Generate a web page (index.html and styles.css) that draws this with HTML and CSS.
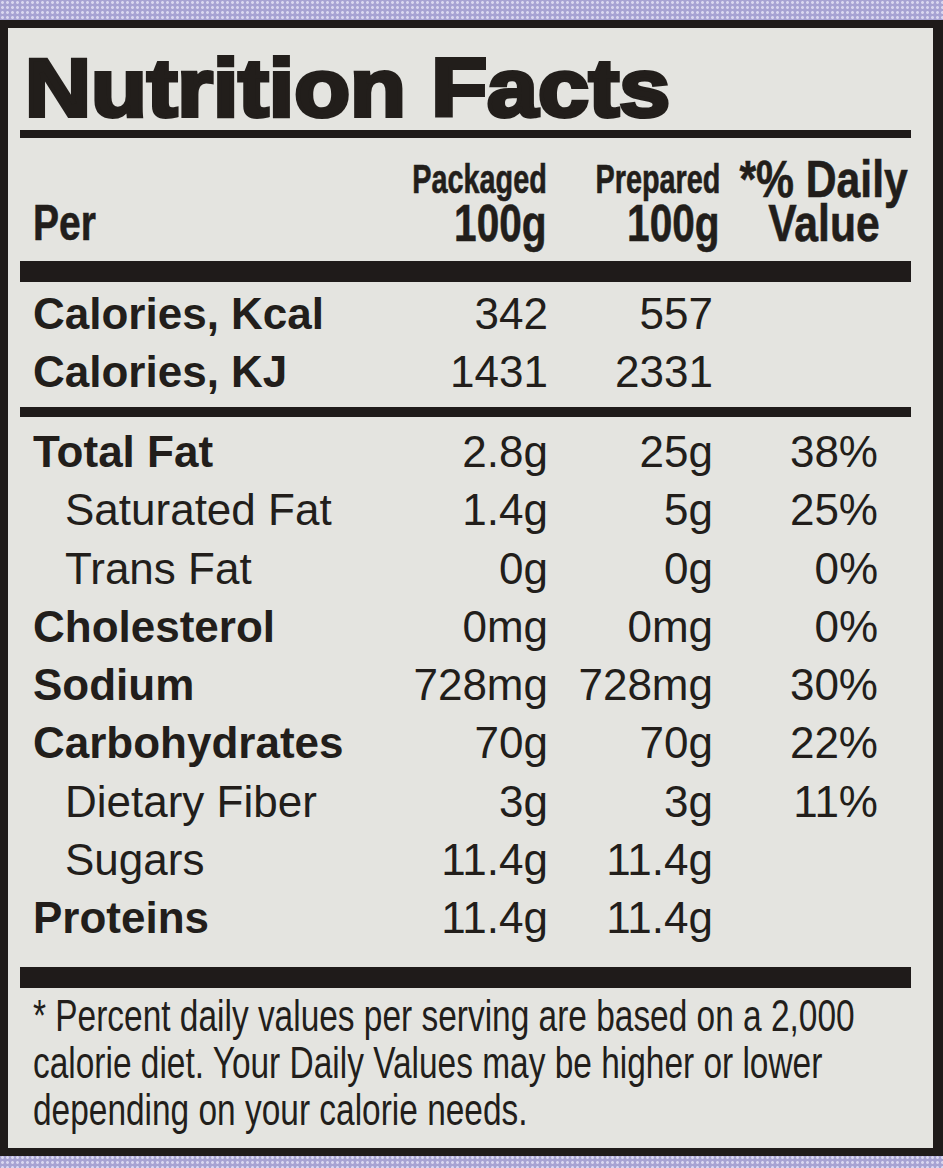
FILE: index.html
```html
<!DOCTYPE html>
<html lang="en">
<head>
<meta charset="utf-8">
<title>Nutrition Facts</title>
<link rel="stylesheet" href="styles.css">
</head>
<body>
<div class="label">
  <h1 class="title"><span class="title-text">Nutrition Facts</span></h1>
  <div class="rule rule-thin"></div>
  <div class="head">
    <div class="hcell hcell-per"><span class="hs">&nbsp;</span><span class="hb"><span class="cond">Per</span></span></div>
    <div class="hcell hcell-num"><span class="hs"><span class="cond">Packaged</span></span><span class="hb"><span class="cond">100g</span></span></div>
    <div class="hcell hcell-num"><span class="hs"><span class="cond">Prepared</span></span><span class="hb"><span class="cond">100g</span></span></div>
    <div class="hcell hcell-dv"><span class="hb1"><span class="cond">*% Daily</span></span><span class="hb"><span class="cond">Value</span></span></div>
  </div>
  <div class="rule rule-thick"></div>
  <div class="rows rows-cal">
    <div class="row"><span class="name bold">Calories, Kcal</span><span class="val">342</span><span class="val">557</span><span class="val"></span></div>
    <div class="row"><span class="name bold">Calories, KJ</span><span class="val">1431</span><span class="val">2331</span><span class="val"></span></div>
  </div>
  <div class="rule rule-mid"></div>
  <div class="rows rows-nut">
    <div class="row"><span class="name bold">Total Fat</span><span class="val">2.8g</span><span class="val">25g</span><span class="val">38%</span></div>
    <div class="row"><span class="name sub">Saturated Fat</span><span class="val">1.4g</span><span class="val">5g</span><span class="val">25%</span></div>
    <div class="row"><span class="name sub">Trans Fat</span><span class="val">0g</span><span class="val">0g</span><span class="val">0%</span></div>
    <div class="row"><span class="name bold">Cholesterol</span><span class="val">0mg</span><span class="val">0mg</span><span class="val">0%</span></div>
    <div class="row"><span class="name bold">Sodium</span><span class="val">728mg</span><span class="val">728mg</span><span class="val">30%</span></div>
    <div class="row"><span class="name bold">Carbohydrates</span><span class="val">70g</span><span class="val">70g</span><span class="val">22%</span></div>
    <div class="row"><span class="name sub">Dietary Fiber</span><span class="val">3g</span><span class="val">3g</span><span class="val">11%</span></div>
    <div class="row"><span class="name sub">Sugars</span><span class="val">11.4g</span><span class="val">11.4g</span><span class="val"></span></div>
    <div class="row"><span class="name bold">Proteins</span><span class="val">11.4g</span><span class="val">11.4g</span><span class="val"></span></div>
  </div>
  <div class="rule rule-thick"></div>
  <div class="note">
    <span class="note-line">* Percent daily values per serving are based on a 2,000</span>
    <span class="note-line">calorie diet. Your Daily Values may be higher or lower</span>
    <span class="note-line">depending on your calorie needs.</span>
  </div>
</div>
</body>
</html>
```

FILE: styles.css
```css
* { box-sizing: border-box; }

html, body {
  margin: 0;
  padding: 0;
}

body {
  width: 943px;
  height: 1168px;
  overflow: hidden;
  background-color: #a7a3d3;
  background-image: radial-gradient(circle, #d9d7ef 1.1px, transparent 1.7px);
  background-size: 5px 5px;
  font-family: "Liberation Sans", Arial, sans-serif;
  color: #221e1b;
}

.label {
  margin-top: 20px;
  width: 943px;
  height: 1136px;
  background: #e4e4e0;
  border: 8px solid #1f1b1a;
  border-right-width: 10px;
  padding: 0 22px 0 12px;
  overflow: hidden;
}

.title {
  margin: 0;
  padding: 19px 0 0 5px;
  font-size: 82px;
  line-height: 82px;
  font-weight: 700;
  white-space: nowrap;
}

.title-text {
  display: inline-block;
  transform: scaleX(1.115);
  transform-origin: left center;
  -webkit-text-stroke: 4px #221e1b;
}

.rule {
  background: #1f1b1a;
}

.rule-thin { height: 8px; margin-top: 1px; }
.rule-thick { height: 21px; }
.rule-mid { height: 10px; }

/* Header */
.head {
  display: grid;
  grid-template-columns: 1fr 167px 173px 191px;
  padding: 17px 0 18px 13px;
  font-weight: 700;
}

.hcell {
  display: flex;
  flex-direction: column;
  white-space: nowrap;
}

.hs, .hb, .hb1 {
  display: flex;
}

.hcell-num .hs,
.hcell-num .hb { justify-content: flex-end; }

.hcell-dv { padding-left: 16px; }
.hcell-dv .hb1,
.hcell-dv .hb { justify-content: center; }

.cond {
  display: inline-block;
  flex: none;
  transform: scaleX(0.78);
  -webkit-text-stroke: 0.6px #221e1b;
}

.hcell-per .cond { transform-origin: left center; }
.hcell-num .cond { transform-origin: right center; }
.hcell-num .hs .cond { transform: scaleX(0.72); }
.hcell-dv .cond { transform-origin: center center; transform: scaleX(0.82); }

.hs {
  font-size: 40px;
  line-height: 48px;
}

.hb1 {
  font-size: 52px;
  line-height: 48px;
}

.hb {
  font-size: 52px;
  line-height: 40px;
}

.hcell-per .hb { font-size: 50px; }

/* Rows */
.rows {
  font-size: 44px;
}

.rows-cal { padding: 3px 0 6px; }
.rows-nut { padding: 6px 0 20px; }

.row {
  display: grid;
  grid-template-columns: 1fr 165px 165px 165px;
  padding: 0 33px 0 13px;
  line-height: 58.25px;
  white-space: nowrap;
}

.rows-cal .row { line-height: 58px; }

.name.bold { font-weight: 700; }
.name.sub { padding-left: 32px; }

.val { text-align: right; }

/* Footnote */
.note {
  padding: 4px 0 0 13px;
  font-size: 44px;
  line-height: 47px;
  white-space: nowrap;
}

.note-line {
  display: block;
  width: max-content;
  transform: scaleX(0.76);
  transform-origin: left center;
}
```
